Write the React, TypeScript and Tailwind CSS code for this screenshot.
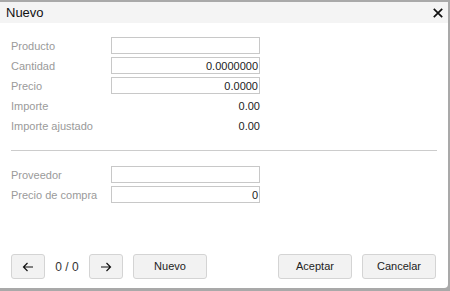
import React from "react";

const Row = ({ label, children }: { label: string; children?: React.ReactNode }) => (
  <div className="flex items-center h-[17px]">
    <div className="w-[100px] text-[11px] text-[#9a9a9a] leading-none pt-[2px]">{label}</div>
    <div className="w-[149px]">{children}</div>
  </div>
);

const Input = ({ value }: { value?: string }) => (
  <div className="h-[17px] border border-[#c8c8c8] bg-white text-right text-[11px] leading-[17px] text-[#222] pr-px">
    {value}
  </div>
);

const Value = ({ value }: { value: string }) => (
  <div className="text-right text-[11px] text-[#222] leading-none pt-[2px]">{value}</div>
);

const Btn = ({ children, w }: { children: React.ReactNode; w: string }) => (
  <button className={`${w} h-[25px] rounded-[3px] border border-[#d4d4d4] bg-[#f2f2f2] text-[11px] text-[#222] flex items-center justify-center`}>
    {children}
  </button>
);

export default function App() {
  return (
    <div className="w-[450px] h-[291px] bg-[#a9a9a9] pt-[2px] overflow-hidden" style={{ fontFamily: '"Liberation Sans", Arial, sans-serif' }}>
      <div className="w-[448px] h-[286px] bg-white rounded-br-[4px] flex flex-col">
        <div className="h-[21px] bg-[#f4f4f4] flex items-center justify-between pl-[6px] pr-[5px]">
          <span className="text-[13px] text-[#111] font-medium">Nuevo</span>
          <svg width="10" height="10" viewBox="0 0 10 10">
            <path d="M0.8 0.8 L9.2 9.2 M9.2 0.8 L0.8 9.2" stroke="#111" strokeWidth="1.7" />
          </svg>
        </div>
        <div className="pl-[11px] pt-[14px] flex flex-col gap-[3px]">
          <Row label="Producto"><Input /></Row>
          <Row label="Cantidad"><Input value="0.0000000" /></Row>
          <Row label="Precio"><Input value="0.0000" /></Row>
          <Row label="Importe"><Value value="0.00" /></Row>
          <Row label="Importe ajustado"><Value value="0.00" /></Row>
        </div>
        <div className="ml-[11px] w-[426px] h-px bg-[#cccccc] mt-[16px]" />
        <div className="pl-[11px] pt-[15px] flex flex-col gap-[3px]">
          <Row label="Proveedor"><Input /></Row>
          <Row label="Precio de compra"><Input value="0" /></Row>
        </div>
        <div className="mt-auto mb-[9px] pl-[11px] pr-[12px] flex items-center">
          <Btn w="w-[34px]">
            <svg width="12" height="10" viewBox="0 0 12 10">
              <path d="M11 5 H1.5 M5.5 1 L1.5 5 L5.5 9" stroke="#111" strokeWidth="1.2" fill="none" />
            </svg>
          </Btn>
          <span className="w-[44px] text-center text-[12px] text-[#333]">0 / 0</span>
          <Btn w="w-[34px]">
            <svg width="12" height="10" viewBox="0 0 12 10">
              <path d="M1 5 H10.5 M6.5 1 L10.5 5 L6.5 9" stroke="#111" strokeWidth="1.2" fill="none" />
            </svg>
          </Btn>
          <div className="w-[10px]" />
          <Btn w="w-[74px]">Nuevo</Btn>
          <div className="flex-1" />
          <Btn w="w-[74px]">Aceptar</Btn>
          <div className="w-[10px]" />
          <Btn w="w-[74px]">Cancelar</Btn>
        </div>
      </div>
    </div>
  );
}
